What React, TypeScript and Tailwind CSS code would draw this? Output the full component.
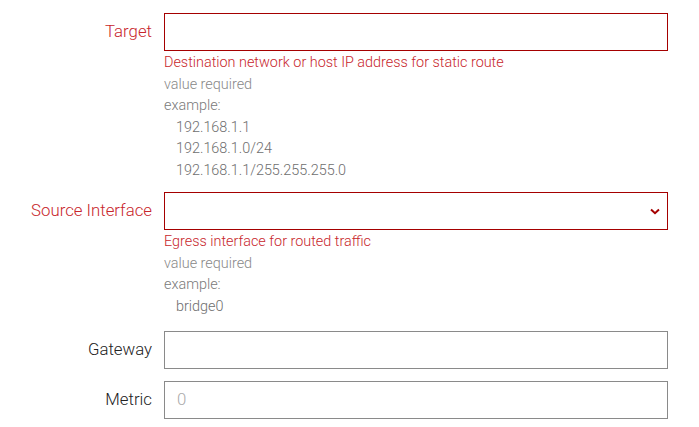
import { ReactNode } from "react";

const Row = ({ label, error, children, desc, className }: { label: string; error?: boolean; children: ReactNode; desc?: ReactNode; className?: string }) => (
  <div className={`grid grid-cols-[152px_504px] gap-x-3 ${className ?? ""}`}>
    <div className={`h-[38px] flex items-center justify-end text-[16.8px] ${error ? "text-[#c8262c]" : "text-[#222]"}`}>{label}</div>
    <div>
      {children}
      {desc}
    </div>
  </div>
);

const Desc = ({ title, examples }: { title: string; examples: string[] }) => (
  <div className="mt-px text-[14.4px] leading-[21.5px] text-[#888]">
    <div className="text-[#c8262c]">{title}</div>
    <div>value required</div>
    <div className="text-[#7a7a7a]">example:</div>
    {examples.map((e) => (
      <div key={e} className="pl-3 text-[#6e6e6e]">{e}</div>
    ))}
  </div>
);

export default function App() {
  return (
    <div className="w-[699px] h-[427px] bg-white pt-[13px] font-['Roboto',sans-serif] font-light">
      <Row
        label="Target"
        error
        className="mb-[11px]"
        desc={<Desc title="Destination network or host IP address for static route" examples={["192.168.1.1", "192.168.1.0/24", "192.168.1.1/255.255.255.0"]} />}
      >
        <div className="h-[38px] border border-[#a50000] bg-white" />
      </Row>
      <Row
        label="Source Interface"
        error
        className="mb-[14px]"
        desc={<Desc title="Egress interface for routed traffic" examples={["bridge0"]} />}
      >
        <div className="h-[38px] border border-[#a50000] bg-white flex items-center justify-end pr-[7px]">
          <svg width="10" height="7" viewBox="0 0 10 7" fill="none">
            <path d="M1 1.5 L5 5.2 L9 1.5" stroke="#a50000" strokeWidth="2" />
          </svg>
        </div>
      </Row>
      <Row label="Gateway" className="mb-3">
        <div className="h-[38px] border border-[#8a8a8a] bg-white" />
      </Row>
      <Row label="Metric">
        <div className="h-[38px] border border-[#8a8a8a] bg-white flex items-center pl-3 text-[16.8px] text-[#aaa]">0</div>
      </Row>
    </div>
  );
}
